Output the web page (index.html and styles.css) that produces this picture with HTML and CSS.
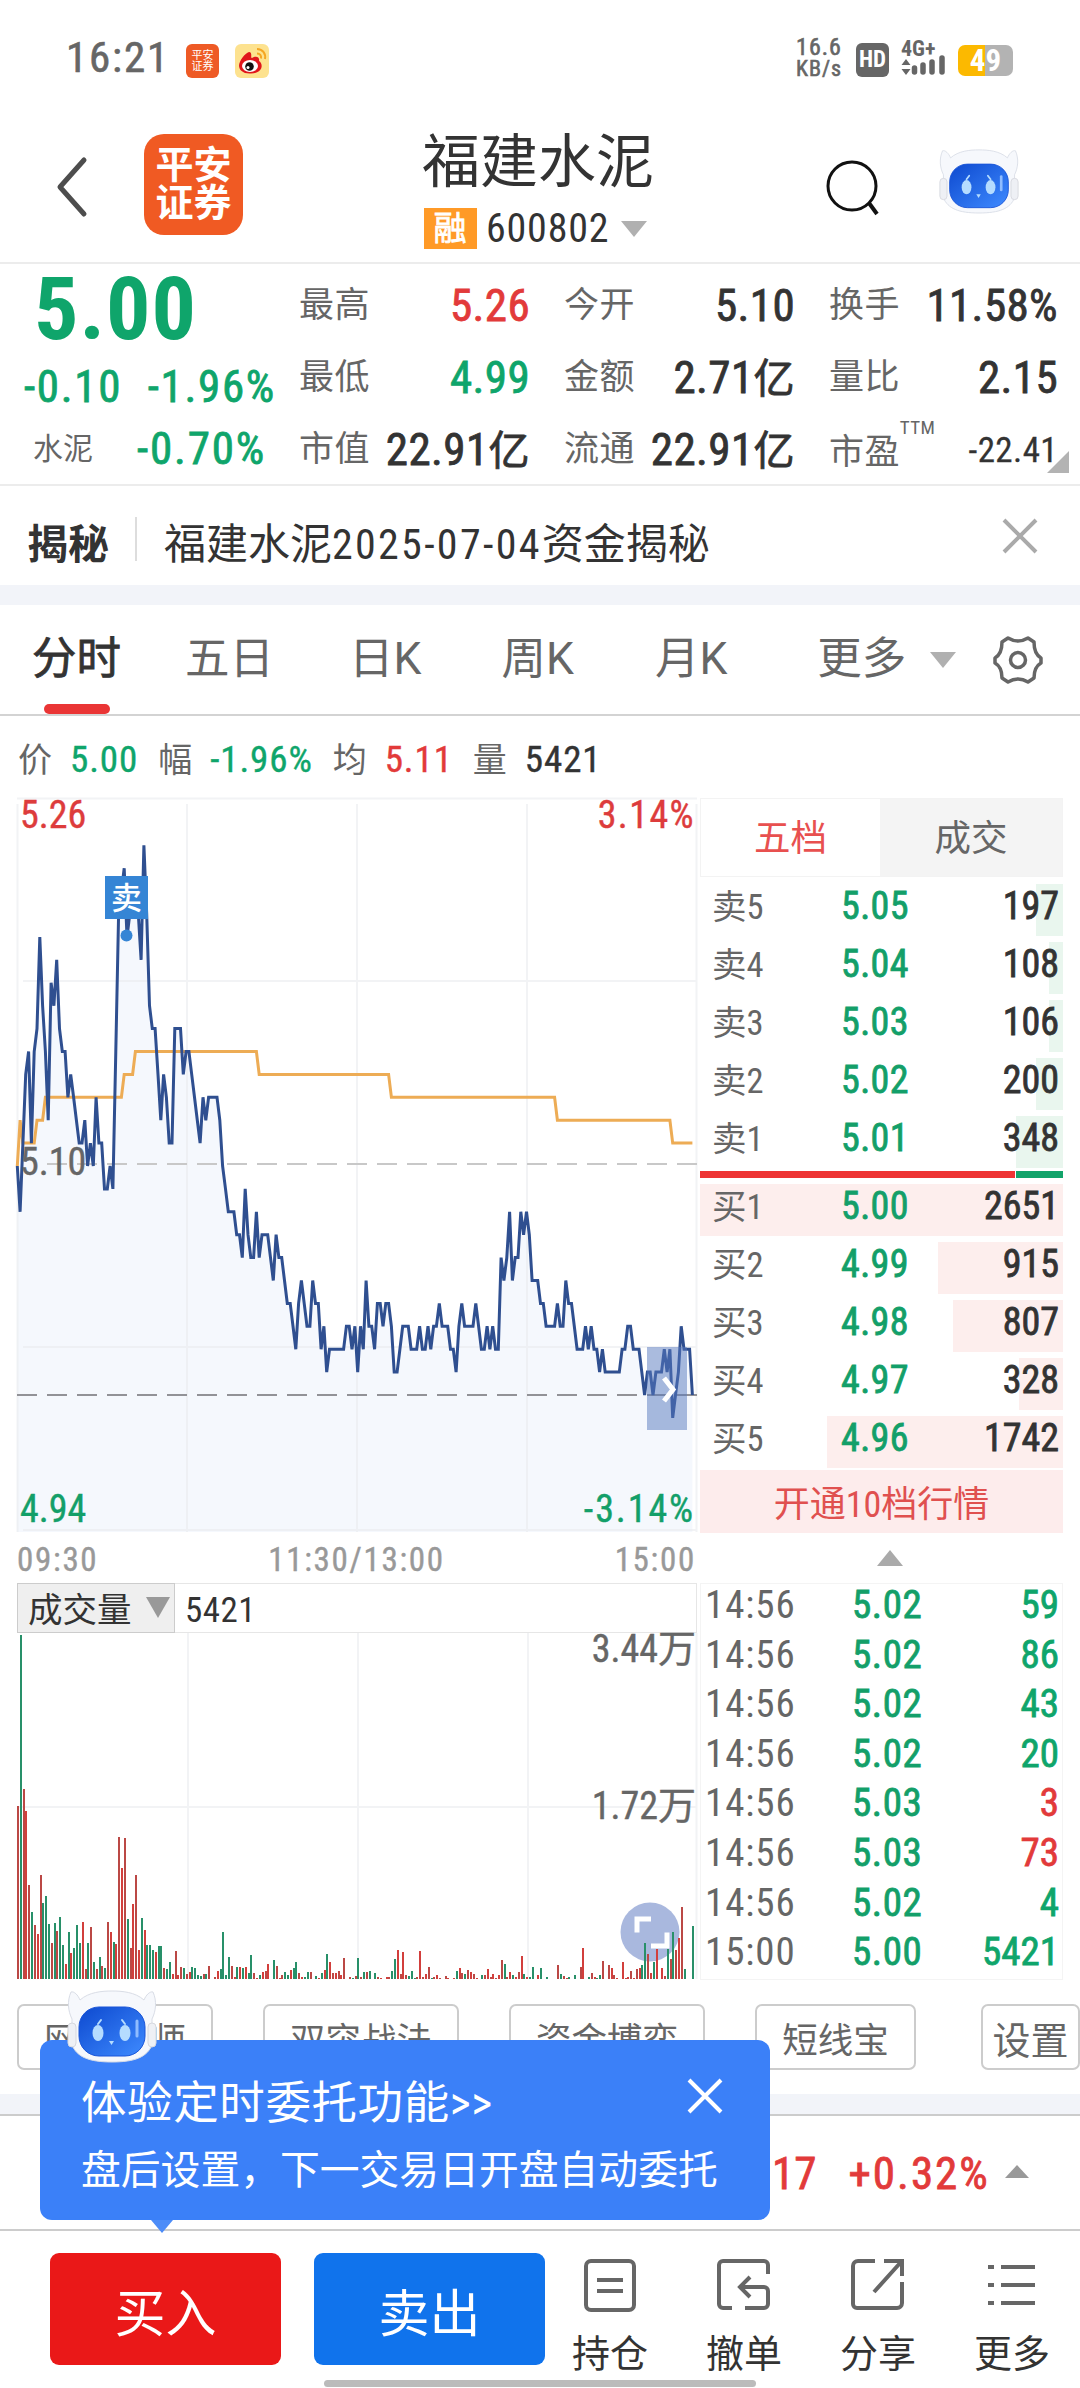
FILE: index.html
```html
<!DOCTYPE html>
<html lang="zh-CN">
<head>
    <meta charset="UTF-8">
    <meta name="viewport" content="width=device-width, initial-scale=1.0">
    <title>福建水泥 600802</title>
    <link rel="stylesheet" href="styles.css">
</head>
<body>
    <svg class="defs" width="0" height="0">
        <defs>
            <linearGradient id="face" x1="0" y1="0" x2="1" y2="1">
                <stop offset="0" stop-color="#0d49cf"/>
                <stop offset="1" stop-color="#3f8bff"/>
            </linearGradient>
            <symbol id="robot" viewBox="0 0 90 74">
                <path d="M4 3C7 2 11 6 13 11C22 3 35 2 45 2S68 3 77 11C79 6 83 2 86 3C90 12 89 22 85 30L85 56C80 68 68 73 45 73S10 68 5 56L5 30C1 22 0 12 4 3Z" fill="#f6f8fc" stroke="#d9dde6" stroke-width="1"/>
                <rect x="1" y="34" width="8" height="24" rx="4" fill="#eef0f5" stroke="#d6d8de"/>
                <rect x="81" y="34" width="8" height="24" rx="4" fill="#eef0f5" stroke="#d6d8de"/>
                <rect x="12" y="18" width="66" height="49" rx="20" fill="url(#face)" stroke="#1a55d8"/>
                <path d="M70 32v15" stroke="#8fbcff" stroke-width="3" stroke-linecap="round"/>
                <ellipse cx="31" cy="44" rx="5.500" ry="8" fill="#b5dcff"/>
                <ellipse cx="58" cy="44" rx="5.500" ry="8" fill="#b5dcff"/>
                <path d="M31 35l3-4M58 35l-3-4" stroke="#b5dcff" stroke-width="2" stroke-linecap="round"/>
                <path d="M42 52h5l-2.500 4z" fill="#b5dcff"/>
            </symbol>
        </defs>
    </svg>

    <div class="status-bar">
        <span class="clock">16:21</span>
        <span class="app-dot">平安<br>证券</span>
        <svg class="weibo" width="34" height="34" viewBox="0 0 34 34">
            <rect width="34" height="34" rx="6" fill="#fde28f"/>
            <path d="M14 8c4 0 1 6 3 6c3-2 8-2 7 3c4 2 5 12-8 12.500C8 30 4 26 4 21.500C4 17 10 9 14 8Z" fill="#e0161c"/>
            <ellipse cx="15" cy="22" rx="8" ry="6" fill="#fff"/>
            <circle cx="14.500" cy="22.500" r="4.300" fill="#111"/>
            <circle cx="13" cy="23.500" r="1.500" fill="#fff"/>
            <path d="M22 5c6 0 9 5 8 10M22 9.500c3 0 4.500 2 4 5" fill="none" stroke="#f5a623" stroke-width="2"/>
        </svg>
        <span class="net-speed">16.6<small>KB/s</small></span>
        <span class="hd">HD</span>
        <svg class="signal" width="46" height="36" viewBox="0 0 46 36">
            <text x="0" y="16" class="signal-text">4G+</text>
            <path d="M5 19l4.500 6h-9zM5 35l4.500-6h-9z" fill="#666"/>
            <path d="M13.500 28v4M22 25v7M31 22v10M41 18v14" stroke="#666" stroke-width="5.500" stroke-linecap="round"/>
        </svg>
        <span class="battery">49</span>
    </div>

    <div class="header">
        <svg class="back" width="34" height="62" viewBox="0 0 34 62"><path d="M29 4L5 31L29 58" fill="none" stroke="#4d4d4d" stroke-width="5" stroke-linecap="round" stroke-linejoin="round"/></svg>
        <div class="logo">平安<br>证券</div>
        <div class="title">
            <h1>福建水泥</h1>
            <div class="code"><span class="rong">融</span>600802<i class="tri-down"></i></div>
        </div>
        <svg class="search" width="54" height="58" viewBox="0 0 54 58"><circle cx="26" cy="27" r="24" fill="none" stroke="#111" stroke-width="3"/><path d="M43 44l8 11" stroke="#111" stroke-width="4"/></svg>
        <svg class="bot" width="80" height="66"><use href="#robot"/></svg>
    </div>

    <div class="quote">
        <div class="price-box">
            <div class="price green">5.00</div>
            <div class="change green"><span>-0.10</span><span>-1.96%</span></div>
            <div class="sector"><span class="name">水泥</span><span class="green">-0.70%</span></div>
        </div>
        <div class="stats">
            <div class="stat"><label>最高</label><b class="red">5.26</b></div>
            <div class="stat"><label>今开</label><b>5.10</b></div>
            <div class="stat"><label>换手</label><b>11.58%</b></div>
            <div class="stat"><label>最低</label><b class="green">4.99</b></div>
            <div class="stat"><label>金额</label><b>2.71<small>亿</small></b></div>
            <div class="stat"><label>量比</label><b>2.15</b></div>
            <div class="stat"><label>市值</label><b>22.91<small>亿</small></b></div>
            <div class="stat"><label>流通</label><b>22.91<small>亿</small></b></div>
            <div class="stat pe"><label>市盈<sup>TTM</sup></label><b>-22.41</b></div>
        </div>
        <i class="corner"></i>
    </div>

    <div class="news">
        <strong>揭秘</strong>
        <span class="news-text">福建水泥<span>2025-07-04</span>资金揭秘</span>
        <svg width="38" height="38" viewBox="0 0 38 38"><path d="M3 3l32 32M35 3L3 35" stroke="#aaa" stroke-width="4"/></svg>
    </div>

    <div class="tabs">
        <span class="tab active">分时</span>
        <span class="tab">五日</span>
        <span class="tab">日K</span>
        <span class="tab">周K</span>
        <span class="tab">月K</span>
        <span class="tab">更多</span>
        <i class="tri-down"></i>
        <svg class="gear" width="50" height="50" viewBox="0 0 50 50" fill="none" stroke="#666" stroke-width="3.500" stroke-linejoin="round"><path d="M15 3Q25 9 35 3L41 7Q41 19 48 23V28Q41 32 41 43L35 47Q25 41 15 47L9 43Q9 32 2 28V23Q9 19 9 7Z"/><circle cx="25" cy="25" r="7.500"/></svg>
    </div>

    <div class="info">
        <span>价</span><b class="green">5.00</b>
        <span>幅</span><b class="green">-1.96%</b>
        <span>均</span><b class="red">5.11</b>
        <span>量</span><b>5421</b>
    </div>

    <div class="main">
        <div class="charts">
            <svg id="priceChart" class="price-chart" width="683" height="735" viewBox="17 798 683 735">
                <path id="priceArea" fill="#f5f8fd"/>
                <path class="grid" d="M17 798.500H697M23 981H697M23 1347H697M23 1530H697M17.500 804V1532M187 804V1532M357 804V1532M527 804V1532M696.500 804V1532"/>
                <path d="M47 1164H697" stroke="#c8c8c8" stroke-width="2" stroke-dasharray="20 10"/>
                <path d="M17 1395H697" stroke="#929297" stroke-width="2" stroke-dasharray="20 10"/>
                <path id="avgLine" fill="none" stroke="#edac55" stroke-width="3"/>
                <path id="priceLine" fill="none" stroke="#2f4f90" stroke-width="3"/>
                <circle cx="126.500" cy="935.500" r="6" fill="#3585d5"/>
                <rect x="105" y="876" width="43" height="43" fill="#3585d5"/>
                <text x="126.500" y="909" class="sell-mark">卖</text>
                <text x="20" y="828" class="axis up">5.26</text>
                <text x="695" y="828" class="axis up end">3.14%</text>
                <text x="20" y="1175" class="axis">5.10</text>
                <text x="20" y="1522" class="axis down">4.94</text>
                <text x="695" y="1522" class="axis down end">-3.14%</text>
                <rect x="647" y="1347" width="40" height="83" fill="#5577bd" fill-opacity=".5"/>
                <path d="M664 1378L673 1389.500L664 1401" fill="none" stroke="#fff" stroke-width="5"/>
            </svg>
            <div class="times"><span>09:30</span><span>11:30/13:00</span><span>15:00</span></div>
            <div class="vol-head"><span class="vol-select">成交量<i></i></span><span class="vol-value">5421</span></div>
            <svg id="volChart" class="vol-chart" width="683" height="347" viewBox="17 1633 683 347">
                <path class="grid" d="M188 1633V1979M358 1633V1979M528 1633V1979M696.500 1633V1979M17 1807H697"/>
                <circle cx="650" cy="1932" r="29.500" fill="#a9b8de"/>
                <g id="volBars"></g>
                <path d="M637 1932.500V1919H651M667 1932.500V1946H651" fill="none" stroke="#fff" stroke-width="5"/>
                <text x="696" y="1662" class="axis end">3.44万</text>
                <text x="696" y="1819" class="axis end">1.72万</text>
            </svg>
        </div>

        <div class="side">
            <div class="side-tabs"><span class="on">五档</span><span>成交</span></div>
            <div class="book">
                <div class="row sell"><i style="width:27px"></i><span>卖5</span><b>5.05</b><em>197</em></div>
                <div class="row sell"><i style="width:14px"></i><span>卖4</span><b>5.04</b><em>108</em></div>
                <div class="row sell"><i style="width:14px"></i><span>卖3</span><b>5.03</b><em>106</em></div>
                <div class="row sell"><i style="width:27px"></i><span>卖2</span><b>5.02</b><em>200</em></div>
                <div class="row sell"><i style="width:47px"></i><span>卖1</span><b>5.01</b><em>348</em></div>
                <div class="ratio"><i></i></div>
                <div class="row buy"><i style="width:363px"></i><span>买1</span><b>5.00</b><em>2651</em></div>
                <div class="row buy"><i style="width:125px"></i><span>买2</span><b>4.99</b><em>915</em></div>
                <div class="row buy"><i style="width:110px"></i><span>买3</span><b>4.98</b><em>807</em></div>
                <div class="row buy"><i style="width:44px"></i><span>买4</span><b>4.97</b><em>328</em></div>
                <div class="row buy"><i style="width:236px"></i><span>买5</span><b>4.96</b><em>1742</em></div>
            </div>
            <div class="open-ten">开通10档行情</div>
            <div class="fold"><i class="tri-up"></i></div>
            <div class="ticks">
                <div class="tick"><span>14:56</span><b>5.02</b><em class="green">59</em></div>
                <div class="tick"><span>14:56</span><b>5.02</b><em class="green">86</em></div>
                <div class="tick"><span>14:56</span><b>5.02</b><em class="green">43</em></div>
                <div class="tick"><span>14:56</span><b>5.02</b><em class="green">20</em></div>
                <div class="tick"><span>14:56</span><b>5.03</b><em class="red">3</em></div>
                <div class="tick"><span>14:56</span><b>5.03</b><em class="red">73</em></div>
                <div class="tick"><span>14:56</span><b>5.02</b><em class="green">4</em></div>
                <div class="tick"><span>15:00</span><b>5.00</b><em class="green">5421</em></div>
            </div>
        </div>
    </div>

    <div class="chips">
        <span class="chip">网络大师</span>
        <span class="chip">双突战法</span>
        <span class="chip">资金博弈</span>
        <span class="chip short">短线宝</span>
        <span class="chip setting">设置</span>
    </div>

    <div class="index-bar"><span>17</span><span>+0.32%</span><i class="tri-up"></i></div>

    <div class="bottom">
        <div class="popup">
            <svg class="popup-bot" width="90" height="74"><use href="#robot"/></svg>
            <div class="popup-title">体验定时委托功能&gt;&gt;
                <svg width="36" height="36" viewBox="0 0 36 36"><path d="M2 2l32 32M34 2L2 34" stroke="#fff" stroke-width="4"/></svg>
            </div>
            <div class="popup-text">盘后设置，下一交易日开盘自动委托</div>
        </div>
        <button class="btn buy-btn">买入</button>
        <button class="btn sell-btn">卖出</button>
        <div class="actions">
            <div class="action">
                <svg width="56" height="56" viewBox="0 0 56 56"><rect x="4" y="4" width="48" height="49" rx="5"/><path d="M15 23h26M15 34h26"/></svg>
                持仓
            </div>
            <div class="action">
                <svg width="56" height="56" viewBox="0 0 56 56"><path d="M52 17V8a4 4 0 0 0-4-4H7a4 4 0 0 0-4 4v39a4 4 0 0 0 4 4H16M34 20L24 30L34 40M25 30H48a4 4 0 0 1 4 4V47a4 4 0 0 1-4 4H29"/></svg>
                撤单
            </div>
            <div class="action">
                <svg width="56" height="56" viewBox="0 0 56 56"><path d="M25 4H8a5 5 0 0 0-5 5V47a4 4 0 0 0 4 4H47a5 5 0 0 0 5-5V25M34 4H52V19M51 5L24 35"/></svg>
                分享
            </div>
            <div class="action">
                <svg width="56" height="56" viewBox="0 0 56 56"><path d="M17 10H51M17 28H51M17 46H51M4 10h6M4 28h6M4 46h6"/></svg>
                更多
            </div>
        </div>
        <i class="home-bar"></i>
    </div>

    <script src="chart.js"></script>
</body>
</html>
```
FILE: styles.css
```css
* {
    box-sizing: border-box;
}
body {
    margin: 0;
    width: 1080px;
    height: 2388px;
    overflow: hidden;
    background: #fff;
    color: #333;
    font-family: Roboto, "Noto Sans CJK SC", sans-serif;
    font-stretch: 75%;
    line-height: 1;
}
.defs {
    position: absolute;
}
i, em {
    font-style: normal;
}
b {
    font-weight: 400;
    -webkit-text-stroke: 0.8px currentColor;
}
.green {
    color: #0fa56b;
}
.red {
    color: #e23a3a;
}
.tri-down {
    border: 13px solid transparent;
    border-top: 16px solid #b0b0b0;
    border-bottom: 0;
}
.tri-up {
    border: 13px solid transparent;
    border-bottom: 16px solid #aaa;
    border-top: 0;
}

/* status bar */
.status-bar {
    display: flex;
    align-items: center;
    height: 101px;
    padding: 14px 67px 0 66px;
    color: #666;
}
.clock {
    width: 120px;
    font-size: 43px;
    letter-spacing: 1.8px;
    -webkit-text-stroke: 0.6px #666;
}
.app-dot {
    width: 33px;
    height: 34px;
    padding-top: 6px;
    margin: 6px 16px 0 0;
    border-radius: 6px;
    background: #ee5a25;
    color: #fff;
    font-size: 11px;
    text-align: center;
}
.weibo {
    margin-top: 6px;
}
.net-speed {
    width: 54px;
    margin-left: auto;
    font-size: 24px;
    letter-spacing: 1px;
    line-height: 23px;
    text-align: center;
    -webkit-text-stroke: 0.6px #666;
}
.net-speed small {
    display: block;
    font-size: 22px;
    line-height: 20px;
}
.hd {
    width: 33px;
    height: 34px;
    margin: 4px 12px 0 10px;
    border-radius: 6px;
    background: #666;
    color: #fff;
    font-size: 23px;
    font-weight: 700;
    line-height: 34px;
    text-align: center;
}
.signal {
    overflow: visible;
}
.signal-text {
    font-size: 22px;
    font-weight: 700;
    fill: #666;
}
.battery {
    width: 55px;
    height: 31px;
    margin: 6px 0 0 11px;
    border-radius: 7px;
    background: linear-gradient(90deg, #fcb900 27px, #b3b3b3 27px);
    color: #fff;
    font-size: 31px;
    font-weight: 700;
    line-height: 32px;
    text-align: center;
}

/* header */
.header {
    display: flex;
    height: 163px;
    padding: 33px 60px 0 55px;
    border-bottom: 2px solid #ececec;
}
.back {
    margin: 22px 55px 0 0;
}
.logo {
    width: 99px;
    height: 101px;
    padding-top: 12px;
    border-radius: 20px;
    background: #f05a23;
    color: #fff;
    font-size: 38px;
    font-weight: 700;
    line-height: 38px;
    text-align: center;
}
.title {
    width: 234px;
    margin-left: 179px;
}
.title h1 {
    margin: -4px 0 0;
    font-size: 58px;
    font-weight: 400;
    line-height: 64px;
    white-space: nowrap;
}
.code {
    display: flex;
    align-items: center;
    height: 41px;
    margin-top: 14px;
    padding-left: 2px;
    font-size: 40px;
    letter-spacing: 0.8px;
}
.rong {
    width: 53px;
    height: 41px;
    margin-right: 9px;
    background: #ff9a27;
    color: #fff;
    font-size: 33px;
    line-height: 41px;
    text-align: center;
    -webkit-text-stroke: 0.8px #fff;
}
.code .tri-down {
    margin-left: 12px;
}
.search {
    margin: 25px 59px 0 170px;
}
.bot {
    margin-top: 14px;
}

/* quote */
.quote {
    position: relative;
    display: flex;
    height: 222px;
    padding: 0 22px 0 24px;
    border-bottom: 2px solid #ececec;
}
.price-box {
    width: 275px;
}
.price {
    height: 84px;
    padding-left: 10px;
    font-size: 88px;
    font-weight: 700;
    letter-spacing: 1px;
    line-height: 90px;
}
.change {
    display: flex;
    justify-content: space-between;
    width: 252px;
    padding-top: 16px;
    font-size: 45px;
    letter-spacing: 1.7px;
    -webkit-text-stroke: 0.8px currentColor;
}
.sector {
    display: flex;
    justify-content: space-between;
    align-items: center;
    width: 242px;
    padding: 17px 0 0 9px;
    font-size: 45px;
    letter-spacing: 1.8px;
    -webkit-text-stroke: 0.8px currentColor;
}
.sector .name {
    color: #666;
    font-size: 30px;
    letter-spacing: 0;
    -webkit-text-stroke: 0;
}
.stats {
    display: grid;
    grid-template-columns: 231px 231px 229px;
    column-gap: 34px;
    grid-auto-rows: 72px;
    padding-top: 5px;
}
.stat {
    display: flex;
    align-items: center;
    justify-content: space-between;
    font-size: 45px;
    letter-spacing: 0.4px;
    white-space: nowrap;
}
.stat label {
    color: #666;
    font-size: 35px;
}
.stat small {
    font-size: 41px;
}
.pe b {
    padding-top: 2px;
    font-size: 35px;
    -webkit-text-stroke-width: 0.3px;
}
.pe sup {
    font-size: 19px;
    vertical-align: 30px;
    line-height: 0;
}
.corner {
    position: absolute;
    right: 11px;
    bottom: 11px;
    border-left: 22px solid transparent;
    border-bottom: 22px solid #b3b3b3;
}

/* news */
.news {
    display: flex;
    align-items: center;
    height: 119px;
    padding: 0 41px 0 27px;
    border-bottom: 20px solid #f2f4f9;
    font-size: 42px;
}
.news strong {
    padding-top: 19px;
    font-size: 41px;
}
.news-text {
    height: 44px;
    margin: 6px auto 0 26px;
    padding: 7px 0 0 27px;
    border-left: 2px solid #ddd;
}
.news-text span {
    letter-spacing: 2.3px;
}

/* tabs */
.tabs {
    display: flex;
    align-items: center;
    height: 111px;
    padding-left: 32px;
    border-bottom: 2px solid #d3d3d3;
    color: #666;
    font-size: 44.500px;
    font-stretch: 100%;
}
.tab {
    position: relative;
    margin-right: 64px;
}
.tab:nth-child(2) {
    margin-right: 75px;
}
.tab:nth-child(3) {
    margin-right: 80px;
}
.tab:nth-child(4) {
    margin-right: 81px;
}
.tab:nth-child(5) {
    margin-right: 90px;
}
.tab:nth-child(6) {
    margin-right: 24px;
}
.active {
    color: #333;
    -webkit-text-stroke: 0.8px #333;
}
.active::after {
    content: "";
    position: absolute;
    left: 12px;
    bottom: -32px;
    width: 66px;
    height: 10px;
    border-radius: 5px;
    background: #ea3535;
}
.gear {
    margin-left: 37px;
}

/* current point */
.info {
    display: flex;
    align-items: center;
    height: 82px;
    padding: 5px 0 0 18px;
    font-size: 37px;
}
.info span {
    margin-right: 18px;
    color: #666;
    font-size: 34px;
}
.info b {
    margin-right: 20px;
    letter-spacing: 0.9px;
    -webkit-text-stroke-width: 0.4px;
}

/* charts */
.main {
    display: flex;
    padding-left: 17px;
}
.charts {
    width: 683px;
}
.charts svg {
    display: block;
    overflow: visible;
}
.grid {
    fill: none;
    stroke: #e9ebef;
    stroke-opacity: 0.6;
    stroke-width: 2;
}
.axis {
    fill: #666;
    font-size: 38px;
    stroke: #666;
    stroke-width: 0.4px;
}
.axis.up {
    fill: #dd3c3c;
    stroke: #dd3c3c;
}
.axis.down {
    fill: #139f69;
    stroke: #139f69;
}
.end {
    text-anchor: end;
}
.up.end {
    letter-spacing: 1.4px;
}
.down.end {
    letter-spacing: 1.9px;
}
.sell-mark {
    fill: #fff;
    font-size: 31px;
    font-weight: 500;
    text-anchor: middle;
}
.times {
    display: flex;
    justify-content: space-between;
    width: 679px;
    height: 50px;
    padding-top: 10px;
    color: #999;
    font-size: 33px;
    letter-spacing: 1.7px;
    -webkit-text-stroke: 0.4px #999;
}
.vol-head {
    display: flex;
    width: 680px;
    height: 50px;
    border: 1px solid #e6e6e6;
    font-size: 35px;
    line-height: 53px;
}
.vol-value {
    letter-spacing: 0.5px;
}
.vol-select {
    display: flex;
    width: 158px;
    margin: -1px 10px -1px -1px;
    padding-left: 10px;
    border: 1px solid #ccc;
    background: #efefef;
    font-size: 34.500px;
}
.vol-select i {
    height: 0;
    margin: 13px 0 0 14px;
    border: 12px solid transparent;
    border-top: 21px solid #999;
    border-bottom: 0;
}

/* order book */
.side {
    width: 363px;
}
.side-tabs {
    display: flex;
    height: 79px;
    border: 1px solid #f3f3f3;
    font-size: 36.500px;
    line-height: 79px;
    text-align: center;
}
.side-tabs span {
    width: 182px;
    background: #f4f4f4;
    color: #666;
}
.side-tabs .on {
    width: 179px;
    background: #fff;
    color: #e8504f;
}
.book {
    height: 593px;
    padding-top: 7px;
}
.row {
    position: relative;
    display: flex;
    height: 52px;
    margin-bottom: 6px;
    padding: 3px 4px 0 12px;
    font-size: 38px;
}
.row i {
    position: absolute;
    right: 0;
    top: 0;
    z-index: -1;
    height: 52px;
    background: #fdeeed;
}
.sell i {
    background: #e9f6ee;
}
.row span {
    width: 129px;
    color: #666;
    font-size: 34.500px;
    line-height: 40px;
}
.row b {
    color: #139f69;
    letter-spacing: 0.4px;
}
.row em, .tick em {
    margin-left: auto;
    -webkit-text-stroke: 0.8px currentColor;
}
.ratio {
    height: 7px;
    margin: -3px 0 6px;
    background: #ee3434;
}
.ratio i {
    display: block;
    width: 48px;
    height: 7px;
    margin-left: auto;
    border-left: 1px solid #fff;
    background: #12a36a;
}
.open-ten {
    height: 63px;
    background: #fdecec;
    color: #e0504f;
    font-size: 36px;
    line-height: 71px;
    text-align: center;
}
.fold {
    display: flex;
    justify-content: center;
    height: 50px;
    padding: 17px 0 0 17px;
}
.fold .tri-up {
    height: 0;
}
.ticks {
    height: 397px;
    border: 1px solid #f4f4f4;
    padding-top: 1px;
}
.tick {
    display: flex;
    height: 49.600px;
    padding: 0 3px 0 4px;
    font-size: 39px;
}
.tick span {
    width: 147px;
    color: #666;
    letter-spacing: 0.9px;
}
.tick span, .tick em, .tick b {
    padding-top: 1px;
}
.tick b {
    color: #139f69;
    letter-spacing: 0.6px;
}

/* strategy chips */
.chips {
    display: flex;
    height: 114px;
    padding: 24px 0 0 17px;
}
.chip {
    flex: none;
    width: 196px;
    height: 66px;
    margin-right: 50px;
    border: 2px solid #ccc;
    border-radius: 7px;
    color: #666;
    font-size: 35.500px;
    line-height: 70px;
    text-align: center;
}
.short {
    width: 161px;
    margin-right: 65px;
}
.setting {
    width: 99px;
    margin: 0;
    font-size: 38px;
}

/* index line */
.index-bar {
    display: flex;
    align-items: center;
    height: 137px;
    padding: 3px 0 0 772px;
    border-top: 20px solid #f2f4f9;
    border-bottom: 2px solid #ccc;
    box-shadow: inset 0 2px #ccc;
    color: #e23a3a;
    font-size: 45px;
    -webkit-text-stroke: 0.8px currentColor;
}
.index-bar span {
    margin-right: 32px;
}
.index-bar span:nth-child(2) {
    letter-spacing: 2px;
}
.index-bar .tri-up {
    margin: -4px 0 0 -17px;
    border-width: 0 12px 13px;
    border-bottom-color: #999;
}

/* bottom bar */
.bottom {
    position: relative;
    display: flex;
    height: 157px;
    padding: 22px 0 0 50px;
}
.btn {
    width: 231px;
    height: 112px;
    margin: 0 33px 0 0;
    padding: 2px 0 0;
    border: none;
    border-radius: 9px;
    color: #fff;
    font-family: inherit;
    font-size: 51px;
}
.buy-btn {
    background: #ea1818;
}
.sell-btn {
    margin-right: 0;
    background: #1073ec;
}
.actions {
    display: flex;
    margin-left: -2px;
}
.action {
    display: flex;
    flex-direction: column;
    align-items: center;
    width: 134px;
    padding-top: 4px;
    color: #333;
    font-size: 38px;
}
.action svg {
    margin-bottom: 22px;
    fill: none;
    stroke: #666;
    stroke-width: 4;
}
.home-bar {
    position: absolute;
    left: 324px;
    bottom: 1px;
    width: 432px;
    height: 7px;
    border-radius: 4px;
    background: #bbb;
}

/* floating tip */
.popup {
    position: absolute;
    left: 40px;
    top: -191px;
    width: 730px;
    height: 180px;
    padding: 41px 42px 0 41px;
    border-radius: 12px;
    background: #3b80f8;
    color: #fff;
}
.popup::after {
    content: "";
    position: absolute;
    left: 111px;
    top: 180px;
    border: 11px solid transparent;
    border-top: 13px solid #4c8cf8;
    border-bottom: 0;
}
.popup-bot {
    position: absolute;
    left: 27px;
    top: -51px;
}
.popup-title {
    font-size: 45.500px;
    letter-spacing: 0.6px;
}
.popup-title svg {
    float: right;
    margin: -3px 5px 0 0;
}
.popup-text {
    margin-top: 24px;
    font-size: 39.800px;
    white-space: nowrap;
}
```
FILE: chart.js
```javascript
// price of every minute, in cents above 5.00
const prices = [
    10, 8, 11, 14, 15, 11, 15, 16, 20, 17, 15, 12, 18, 17, 19, 16, 15, 15, 13, 14,
    13, 12, 11, 11, 12, 10, 11, 10, 13, 11, 11, 9, 9, 10, 9, 15, 21, 22, 23, 20,
    21, 21, 22, 21, 19, 24, 21, 17, 16, 16, 14, 12, 14, 13, 11, 11, 16, 16, 16, 14,
    15, 15, 14, 13, 12, 11, 13, 12, 13, 13, 13, 13, 12, 10, 9, 8, 8, 8, 7, 7,
    6, 9, 7, 6, 6, 8, 6, 7, 7, 7, 6, 5, 7, 6, 6, 5, 4, 4, 3, 2,
    4, 5, 4, 3, 3, 5, 4, 4, 2, 3, 1, 2, 2, 2, 2, 2, 2, 3, 3, 2,
    3, 1, 3, 2, 5, 3, 3, 2, 4, 4, 3, 4, 4, 3, 1, 1, 2, 3, 3, 3,
    2, 2, 2, 3, 2, 2, 3, 2, 3, 3, 4, 3, 3, 3, 2, 2, 1, 3, 4, 3,
    3, 3, 3, 4, 3, 2, 2, 3, 2, 3, 2, 2, 6, 5, 6, 8, 5, 6, 6, 8,
    7, 8, 7, 5, 5, 5, 4, 4, 3, 3, 3, 3, 4, 3, 3, 5, 4, 4, 3, 2,
    2, 2, 3, 2, 3, 2, 2, 1, 2, 1, 1, 1, 1, 1, 1, 2, 2, 3, 3, 2,
    2, 2, 1, 0, 1, 1, 0, 1, 1, 1, 2, 1, 2, -1, 0, 1, 3, 2, 2, 2, 0
];

// average price: [from minute, to minute, cents above 5.00]
const averages = [
    [0, 0, 10], [1, 1, 12], [2, 6, 11], [7, 9, 12], [10, 37, 13], [38, 41, 14],
    [42, 85, 15], [86, 132, 14], [133, 191, 13], [192, 232, 12], [233, 240, 11]
];

// bar heights, negative is a falling minute (green)
const volumes = [
    173, -344, 190, 168, 94, -67, 54, 45, 104, -76, -83, -55, 36, -56, 48, -62, -34, 15, -47, 26,
    -31, -54, -36, 57, 10, -36, 52, -17, 10, -22, 13, -11, 57, 47, -37, 35, 142, 111, 141, -60,
    31, 75, 104, 29, -61, 49, -34, -34, -29, 27, -33, -33, 11, -10, -17, 5, 28, 4, 12, -11,
    5, 7, -12, -11, -4, -3, 5, -5, 13, 0, 2, 8, -10, -47, -4, -22, 13, 2, -12, 12,
    -11, 12, -6, -24, 6, 1, -4, 7, 8, 15, 0, -19, 13, 1, 4, -7, -4, 9, -11, -17,
    6, 2, -2, -7, 7, 0, -3, 1, -6, 9, -25, 17, 6, 6, 8, 4, 21, 0, 2, -1,
    3, -21, 2, -7, 7, -8, 0, -6, 2, 1, 0, 2, 2, -8, -20, 29, 5, 27, 4, -3,
    -8, -1, 2, 28, 2, 5, 12, -1, 2, 4, 1, 0, 3, 1, 0, 1, -8, 11, 6, -5,
    9, 7, 5, 1, 0, -4, 4, 10, 2, 5, 1, 4, 19, -15, 2, 7, -4, 2, 7, 23,
    -5, 2, -2, -12, 0, 4, -11, 0, -2, 0, 0, 0, 14, -5, 3, 1, -2, 0, -4, 0,
    12, 31, 0, -2, 6, 2, -1, -4, 18, 0, 14, 11, 4, 1, 0, 17, 1, 2, 8, 1,
    10, 11, -14, -36, 25, 6, -17, 30, 0, 11, 3, -30, 20, -47, 29, 41, 72, -10, 0, 0, -53
];

const x = i => (17.3 + i * 2.813).toFixed(1);
const y = cents => (1395 - cents * 22.9).toFixed(1);

const line = prices.map((p, i) => `${i ? 'L' : 'M'}${x(i)} ${y(p)}`).join('');
document.getElementById('priceLine').setAttribute('d', line);
document.getElementById('priceArea').setAttribute('d', `${line}V1532H17Z`);

const avg = averages.map(([from, to, p]) => `${x(from)} ${y(p)}L${x(to)} ${y(p)}`).join('L');
document.getElementById('avgLine').setAttribute('d', `M${avg}`);

document.getElementById('volBars').innerHTML = volumes.map((v, i) => {
    if (!v) return '';
    const h = Math.abs(v);
    const color = v > 0 ? (i % 2 ? '#d23f3c' : '#bb4845') : '#289069';
    return `<rect x="${Math.round(17 + i * 2.813)}" y="${1979 - h}" width="2" height="${h}" fill="${color}"/>`;
}).join('');
```
